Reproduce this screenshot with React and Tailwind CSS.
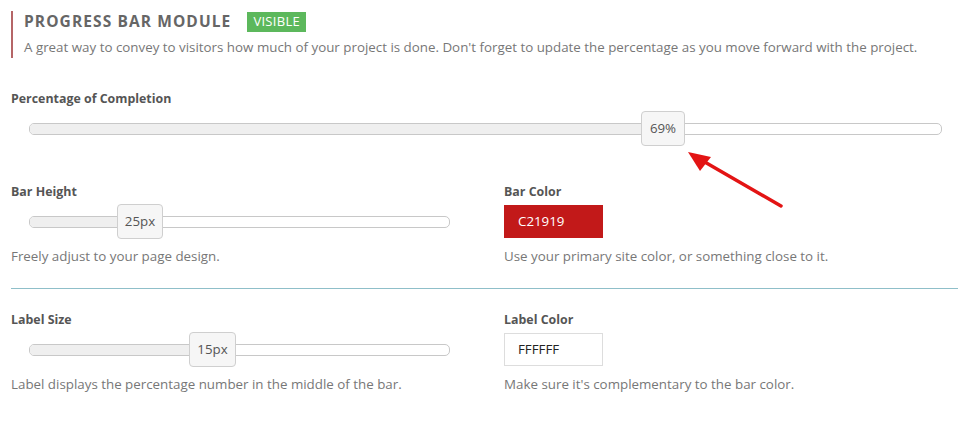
import React from "react";

function Slider({ width, pos, handleW, value }) {
  return (
    <div className="relative h-[35px] ml-[18px] flex items-center" style={{ width }}>
      <div className="relative w-full h-[12px] rounded-[5px] border border-[#c8c8c8] bg-white overflow-hidden">
        <div className="h-full bg-[#efefef]" style={{ width: pos + handleW / 2 }} />
      </div>
      <div
        className="absolute top-0 h-[35px] rounded-[4px] border border-[#cfcfcf] bg-[#f6f6f6] flex items-center justify-center text-[13.3px] text-[#555]"
        style={{ left: pos, width: handleW }}
      >
        {value}
      </div>
    </div>
  );
}

export default function App() {
  return (
    <div className="relative w-[966px] h-[435px] bg-white pl-[11px] pt-[11px] overflow-hidden" style={{ fontFamily: '"Open Sans", "Segoe UI", sans-serif' }}>
      <div className="border-l-2 border-[#b56567] pl-[11px] h-[47px]">
        <div className="flex items-center h-[21px] gap-[16px]">
          <span className="text-[15.5px] font-bold tracking-[1.1px] text-[#666] leading-none">PROGRESS BAR MODULE</span>
          <span className="bg-[#5cb85c] text-white text-[13px] h-[20px] px-[6px] flex items-center leading-none tracking-[0.3px]">VISIBLE</span>
        </div>
        <div className="mt-[5px] text-[13.35px] leading-[21px] text-[#777] whitespace-nowrap">
          A great way to convey to visitors how much of your project is done. Don't forget to update the percentage as you move forward with the project.
        </div>
      </div>

      <div className="mt-[33px] text-[12.4px] font-bold leading-[16px] text-[#555]">Percentage of Completion</div>
      <div className="mt-[4px]">
        <Slider width={913} pos={612} handleW={44} value="69%" />
      </div>

      <div className="mt-[38px] grid grid-cols-[493px_1fr]">
        <div>
          <div className="text-[12.4px] font-bold leading-[16px] text-[#555]">Bar Height</div>
          <div className="mt-[4px]">
            <Slider width={421} pos={88} handleW={46} value="25px" />
          </div>
          <div className="mt-[8px] text-[13.35px] leading-[18px] text-[#777]">Freely adjust to your page design.</div>
        </div>
        <div>
          <div className="text-[12.4px] font-bold leading-[16px] text-[#555]">Bar Color</div>
          <div className="mt-[4px] h-[35px] flex items-center">
            <div className="w-[99px] h-[33px] bg-[#c21919] text-white text-[13.3px] flex items-center pl-[14px]">C21919</div>
          </div>
          <div className="mt-[8px] text-[13.35px] leading-[18px] text-[#777]">Use your primary site color, or something close to it.</div>
        </div>
      </div>

      <div className="mt-[23px] h-px w-[947px] bg-[#8fbfc9]" />

      <div className="mt-[23px] grid grid-cols-[493px_1fr]">
        <div>
          <div className="text-[12.4px] font-bold leading-[16px] text-[#555]">Label Size</div>
          <div className="mt-[4px]">
            <Slider width={421} pos={160} handleW={47} value="15px" />
          </div>
          <div className="mt-[8px] text-[13.35px] leading-[18px] text-[#777]">Label displays the percentage number in the middle of the bar.</div>
        </div>
        <div>
          <div className="text-[12.4px] font-bold leading-[16px] text-[#555]">Label Color</div>
          <div className="mt-[4px] h-[35px] flex items-center">
            <div className="w-[99px] h-[33px] bg-white border border-[#ddd] text-[#222] text-[13.3px] flex items-center pl-[13px]">FFFFFF</div>
          </div>
          <div className="mt-[8px] text-[13.35px] leading-[18px] text-[#777]">Make sure it's complementary to the bar color.</div>
        </div>
      </div>

      <svg className="absolute left-0 top-0 pointer-events-none" width="966" height="435">
        <line x1="781" y1="206" x2="703" y2="161" stroke="#e31414" strokeWidth="3.5" strokeLinecap="round" />
        <polygon points="688,152 711,157 700,171" fill="#e31414" />
      </svg>
    </div>
  );
}
